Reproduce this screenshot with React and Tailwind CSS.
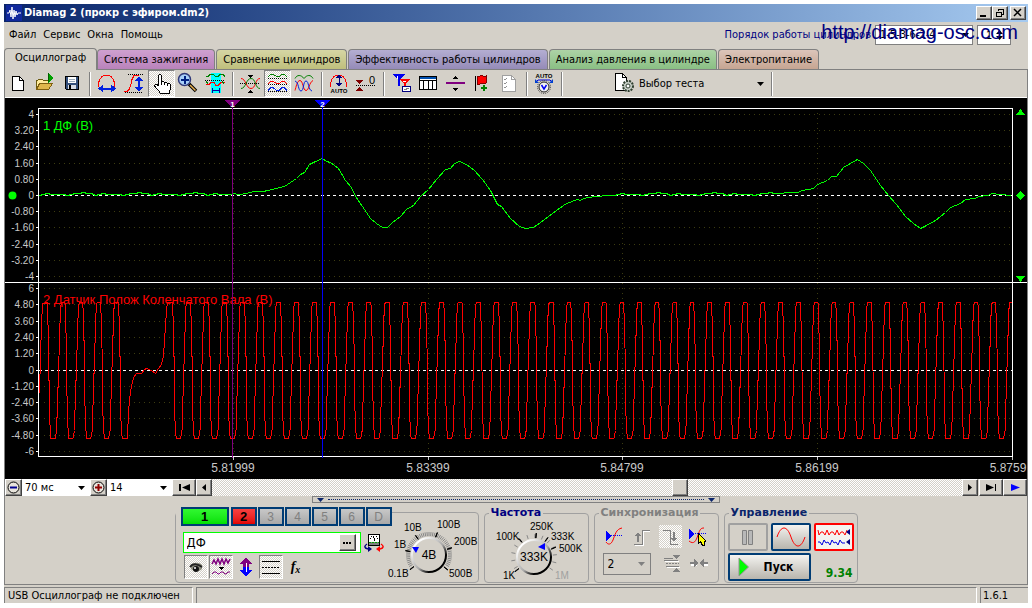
import React, { useState } from "react";

const TABS = [
  { label: "Осциллограф", color: "bg-[#d4d0c8]" },
  { label: "Система зажигания", color: "bg-linear-to-b from-[#cfa0d0] to-[#b983bb]" },
  { label: "Сравнение цилиндров", color: "bg-linear-to-b from-[#d6d6a4] to-[#bfbf7c]" },
  { label: "Эффективность работы цилиндров", color: "bg-linear-to-b from-[#b4aed2] to-[#958bb8]" },
  { label: "Анализ давления в цилиндре", color: "bg-linear-to-b from-[#add3a6] to-[#8abf84]" },
  { label: "Электропитание", color: "bg-linear-to-b from-[#dcc5ba] to-[#c6a592]" },
];

const RAISED =
  "border border-t-white border-l-white border-r-[#404040] border-b-[#404040] bg-[#d4d0c8] shadow-[inset_-1px_-1px_0_#808080]";
const CHECKER = "bg-[repeating-conic-gradient(#fff_0_25%,#d4d0c8_0_50%)] bg-[length:2px_2px]";
const PRESSED = `border border-t-[#808080] border-l-[#808080] border-r-white border-b-white ${CHECKER}`;
const BLUE_BTN = "rounded-xs border-2 border-[#003c74] bg-linear-to-b from-[#f4f3f0] to-[#b8b5ad]";

const Icon = ({ children, size = 23 }) => (
  <svg
    width={size}
    height={size}
    viewBox={`0 0 ${size} ${size}`}
    fill="none"
    shapeRendering="crispEdges"
    aria-hidden="true"
    className="shrink-0"
  >
    {children}
  </svg>
);

/* Toolbar icons */
const NewIcon = () => (
  <Icon>
    <path d="M5.5 4.5h7l4 4v10h-11z" fill="#fff" stroke="#000" />
    <path d="M12.5 4.5v4h4" stroke="#000" />
  </Icon>
);

const OpenIcon = () => (
  <Icon>
    <path d="M2.5 17.5v-9h1l1-1h4l1 1h5v3" fill="#ffeb9c" stroke="#6b5a10" />
    <path d="M2.5 17.5l3-6h13l-4 6z" fill="#e0b84c" stroke="#806010" />
    <path d="M14 1l6 5-6 5z" fill="#00a000" />
    <path d="M14.5 1v9" stroke="#006000" />
  </Icon>
);

const SaveIcon = () => (
  <Icon>
    <path d="M4.5 4.5h13v13h-12l-1-1z" fill="#35507c" stroke="#000" />
    <path d="M7 5h8v6H7z" fill="#fff" />
    <path d="M8 7.5h6M8 9.5h6" stroke="#9ab" />
    <path d="M7 13h8v4H7z" fill="#d8dce4" />
    <path d="M8 13h2v4H8z" fill="#000" />
  </Icon>
);

const WidthIcon = () => (
  <Icon>
    <path d="M2.5 15v-4l1-3 2-3 3-2h4l3 2 2 3 1 3v4" stroke="#f00" />
    <path d="M4 16.5h14" stroke="#0020e0" strokeWidth="2" />
    <path d="M2 16.5l5-4v8zM20 16.5l-5-4v8z" fill="#0020e0" />
  </Icon>
);

const HeightIcon = () => (
  <Icon>
    <path d="M5 2.5h16M2 20.5h18" stroke="#000" strokeDasharray="1 1" />
    <path d="M1 19.5h3l2-2 2-5 1-5 2-4h5" stroke="#f00" />
    <path d="M16 6v12" stroke="#0020e0" strokeWidth="2" />
    <path d="M16 4l4 5h-8zM16 20l4-5h-8z" fill="#0020e0" />
  </Icon>
);

const HandIcon = () => (
  <Icon>
    <path
      d="M8.5 13.5v-10l1-1h1l1 1v6h2l1 1h2l1 1h2l1 1v5l-1 1v3h-9l-2-3-3-3-1-2 1-1h1z"
      fill="#fff"
      stroke="#000"
    />
    <path d="M11.5 9v4M14.5 10v3M17.5 11v3" stroke="#000" />
  </Icon>
);

const ZoomIcon = () => (
  <Icon>
    <g shapeRendering="auto">
      <path d="M12 12l7 7" stroke="#000" strokeWidth="3.5" />
      <path d="M13 13l5.5 5.5" stroke="#e8b050" strokeWidth="1.5" />
      <circle cx="7.5" cy="7.5" r="6" fill="#a8d0f8" stroke="#303878" strokeWidth="1.5" />
    </g>
    <path d="M4 7h7v1H4zM7 4h1v7H7z" fill="#002080" stroke="#002080" />
  </Icon>
);

const RangeIcon = () => (
  <Icon>
    <path d="M7 1h10v20H7z" fill="#0ff" />
    <path d="M2 4.5h2l2-2h3l3 2h2l2-2h3l2 2" stroke="#008000" />
    <path d="M1 8.5h20" stroke="#000" strokeDasharray="1 1" />
    <path d="M2 12.5h3l2-2h3l2 3h2l3-3h4" stroke="#f00" />
    <path d="M2 9.5l2 2M18 9.5l2 2" stroke="#008000" />
    <path d="M8 18.5h8M8.5 16v5M15.5 16v5" stroke="#0000a0" />
  </Icon>
);

const CrossIcon = () => (
  <Icon>
    <path d="M8 3h6l-3 3zM8 21h6l-3-3z" fill="#000" />
    <path d="M1 11.5h20" stroke="#000" strokeDasharray="1 1" />
    <g shapeRendering="auto">
      <path d="M2 6.5c5 0 5 10 10 10s4-10 9-10" stroke="#f00" />
      <path d="M2 16.5c5 0 5-10 10-10s4 10 9 10" stroke="#008000" />
    </g>
  </Icon>
);

const SplitIcon = () => (
  <Icon>
    <path d="M2 6.5h19M2 12.5h19M2 19.5h19" stroke="#000" strokeDasharray="1 1" />
    <path d="M2 4.5l3-2h2l4 2h2l3-2h2l3 2" stroke="#008000" />
    <path d="M2 11.5l3-2h2l4 2h2l3-2h2l3 2" stroke="#f00" />
    <path d="M2 18.5l3-3h2l4 3h2l3-3h2l3 3" stroke="#0020e0" />
  </Icon>
);

const OverlayIcon = () => (
  <Icon>
    <g shapeRendering="auto">
      <path d="M2 6.5c2-4 6-4 9 0 3-4 7-4 9 0" stroke="#008000" />
      <path d="M2 18.5c1-3 2-10 5-10s3 10 6 10 3-8 7-10" stroke="#f00" />
      <path d="M2 9c4 1 3 10 6 10s2-10 5-10 2 9 6 10" stroke="#0020e0" />
    </g>
  </Icon>
);

const AutoHeightIcon = () => (
  <Icon>
    <path d="M2.5 15v-3l1-4 2-3 3-2h4l3 2 2 3 1 4v3" stroke="#f00" />
    <path d="M11 3v11" stroke="#000080" />
    <path d="M11 2l3 4H8zM11 15l3-4H8z" fill="#000080" />
    <text x="11" y="21" textAnchor="middle" fontSize="6" fontWeight="bold" fill="#000" fontFamily="Liberation Sans, sans-serif">
      AUTO
    </text>
  </Icon>
);

const ZeroIcon = () => (
  <Icon>
    <path d="M1 8h7l-3.5 4zM1 19h7l-3.5-4z" fill="#800000" />
    <path d="M1 13.5h19" stroke="#000" strokeDasharray="1 1" />
    <text x="14" y="12" fontSize="11" fill="#000" fontFamily="Liberation Sans, sans-serif">
      0
    </text>
  </Icon>
);

const TriggersIcon = () => (
  <Icon>
    <path d="M2 2h13l-5 6v6H8V8z" fill="#0000f0" />
    <path d="M9 7h11l-4 5v4h-2v-4z" fill="#f00" />
    <path d="M7.5 4v3M13 9.5h3" stroke="#fff" />
    <path d="M12.5 14.5h8v5h-8z" fill="#fff" stroke="#000080" />
    <path d="M14 17.5h2l1-1h2" stroke="#808080" />
  </Icon>
);

const TableIcon = () => (
  <Icon>
    <path d="M2.5 4.5h17v13h-17z" fill="#fff" stroke="#000" />
    <path d="M3 5h16v2H3z" fill="#0050b0" />
    <path d="M3 8.5h16M6.5 8v9M11.5 8v9M15.5 8v9" stroke="#000" />
  </Icon>
);

const MoveIcon = () => (
  <Icon>
    <path d="M8 7h6l-3-3zM8 16h6l-3 3z" fill="#000" />
    <path d="M2 11h19" stroke="#800080" strokeWidth="2" />
  </Icon>
);

const FlagIcon = () => (
  <Icon>
    <path d="M4.5 4v15" stroke="#000" />
    <path d="M6 5l3-1 2-1 2 2 2-1v7l-2 1-2-1-2 1-3 1z" fill="#f00" stroke="#800000" />
    <path d="M13 13v6M10 16h6" stroke="#008000" strokeWidth="2" />
  </Icon>
);

const ChecklistIcon = () => (
  <Icon>
    <path d="M4.5 3.5h9l4 4v12h-13z" fill="#fff" stroke="#a0a0a0" />
    <path d="M13.5 3.5v4h4" stroke="#a0a0a0" />
    <path d="M6 7l1 1 2-2M6 11l1 1 2-2M6 15l1 1 2-2" stroke="#909090" />
  </Icon>
);

const AutoDialIcon = () => (
  <Icon>
    <text x="11" y="6" textAnchor="middle" fontSize="6" fontWeight="bold" fill="#000" fontFamily="Liberation Sans, sans-serif">
      AUTO
    </text>
    <g shapeRendering="auto">
      <path d="M3 10l2-2h12l2 2" stroke="#0000e0" />
      <path d="M2 7v4h4zM20 7v4h-4z" fill="#0040d0" />
      <circle cx="11" cy="15" r="6.5" stroke="#404040" strokeDasharray="1 1" />
      <circle cx="11" cy="15" r="5" fill="#f4f4f4" stroke="#202020" />
      <path d="M8.5 13l2.5 4 2.5-4" stroke="#0000f0" strokeWidth="1.5" />
    </g>
  </Icon>
);

const TestIcon = () => (
  <Icon>
    <path d="M3.5 1.5h7l4 4v13h-11z" fill="#fff" stroke="#000" />
    <path d="M10.5 1.5v4h4" stroke="#000" />
    <g shapeRendering="auto">
      <circle cx="16" cy="14" r="5" fill="#c8d0c8" stroke="#304030" strokeWidth="2" strokeDasharray="2 1" />
      <circle cx="16" cy="14" r="2" fill="#fff" stroke="#304030" />
    </g>
  </Icon>
);

const TOOLBAR = [
  [
    ["Новый", NewIcon],
    ["Открыть", OpenIcon],
    ["Сохранить", SaveIcon],
  ],
  [
    ["Растянуть по ширине", WidthIcon],
    ["Растянуть по высоте", HeightIcon],
    ["Перемещение", HandIcon, true],
    ["Увеличить", ZoomIcon],
    ["Диапазон", RangeIcon],
  ],
  [
    ["Совместить нули", CrossIcon],
    ["Разделить каналы", SplitIcon, true],
    ["Наложить каналы", OverlayIcon],
  ],
  [
    ["Автомасштаб", AutoHeightIcon],
    ["Обнуление", ZeroIcon],
  ],
  [
    ["Маркеры", TriggersIcon],
    ["Таблица", TableIcon],
    ["Линейка", MoveIcon],
    ["Добавить метку", FlagIcon],
    ["Отчёт", ChecklistIcon],
  ],
  [["Автоизмерение", AutoDialIcon]],
];

const Separator = () => (
  <div className="flex w-2 shrink-0 justify-center">
    <div className="h-6 w-[2px] border-l border-[#808080] bg-white" />
  </div>
);

const Arrow = ({ className = "" }) => (
  <svg width="7" height="4" viewBox="0 0 7 4" aria-hidden="true" className={`pointer-events-none shrink-0 ${className}`}>
    <path d="M0 0h7L3.5 4z" fill="currentColor" />
  </svg>
);

/* Scope traces */
const GREEN_SHAPE = [
  [232, 193], [239, 194], [246, 193], [253, 191], [262, 191], [268, 190], [275, 188], [284, 186], [290, 182],
  [296, 178], [300, 174], [304, 172], [309, 164], [315, 161], [322, 158], [326, 161], [330, 162], [334, 165],
  [338, 168], [345, 180], [351, 187], [355, 196], [362, 206], [370, 218], [376, 223], [382, 227], [387, 227],
  [392, 222], [400, 216], [406, 209], [413, 205], [420, 196], [428, 189], [436, 179], [445, 169], [450, 168],
  [454, 163], [459, 161], [466, 164], [474, 170], [482, 179], [490, 190], [497, 204], [501, 206], [510, 218],
  [519, 226], [525, 228], [533, 227], [540, 222], [548, 216], [556, 210], [566, 203], [577, 199], [580, 200],
  [583, 198], [595, 196], [609, 195],
];
const GREEN_TAIL = [
  [780, 193], [788, 192], [797, 192], [802, 190], [813, 188], [817, 184], [827, 180], [831, 176], [836, 176],
  [843, 167], [850, 163], [857, 159], [863, 163], [870, 170], [880, 185], [888, 195], [896, 204], [905, 216],
  [913, 223], [920, 228], [926, 225], [935, 220], [945, 212], [950, 207], [960, 203], [965, 199], [975, 198],
  [978, 196], [988, 195], [991, 193], [1000, 194], [1011, 195],
];
const NOISE = [195, 194, 193, 194, 194, 192, 193, 195, 193, 194, 194, 193, 194, 193];

const noise = (from, to) => {
  const points = [];
  for (let x = from, i = 0; x < to; x += 4, i++) points.push([x, NOISE[(i * 3) % NOISE.length]]);
  return points;
};

const GREEN = [...noise(39, 232), ...GREEN_SHAPE, ...noise(614, 778), ...GREEN_TAIL];

// one tooth of the crankshaft sensor, x is relative to the middle of the trough
const PULSE = [
  [-6, 302], [-5.3, 320], [-4.6, 347], [-4.3, 370], [-4, 395], [-3.5, 420], [-2.3, 438], [2, 438],
  [3.5, 430], [4, 410], [4.7, 391], [5.3, 370], [6, 350], [6.7, 325], [7.5, 306], [8.3, 302],
];
const GAP = [
  [127, 438], [128, 410], [130, 391], [133, 377], [136, 373], [141, 373], [144, 369], [146, 368],
  [151, 370], [155, 373], [158, 368], [161, 364], [163, 355], [164, 340], [166, 310], [167, 302],
];

const pulses = (first, period, count) =>
  Array.from({ length: count }, (_, i) => PULSE.map(([dx, y]) => [first + i * period + dx, y])).flat();

const RED = [
  [39, 393], [40, 355], [41, 325], [42, 303],
  ...pulses(52.7, 17.8, 4),
  ...PULSE.slice(0, 7).map(([dx, y]) => [124 + dx, y]),
  ...GAP,
  ...pulses(178, 18, 9),
  ...pulses(340, 18.22, 12),
  ...pulses(558.7, 17.6, 8),
  ...pulses(699.2, 17.76, 18),
  [1011, 302],
];

const toPoints = (list) => list.map(([x, y]) => `${(x - 4.5).toFixed(1)},${(y - 97.5).toFixed(1)}`).join(" ");

const TOP_LABELS = ["4", "3.20", "2.40", "1.60", "0.80", "0", "-0.80", "-1.60", "-2.40", "-3.20", "-4"];
const BOTTOM_LABELS = ["6", "4.80", "3.60", "2.40", "1.20", "0", "-1.20", "-2.40", "-3.60", "-4.80", "-6"];
const TIMES = [
  [228, "5.81999"],
  [423, "5.83399"],
  [617, "5.84799"],
  [812, "5.86199"],
  [1007, "5.8759"],
];

const Scale = ({ labels, top, step }) =>
  labels.map((label, i) => {
    const y = Math.round(top + i * step);
    return (
      <g key={label}>
        <path d={`M31 ${y + 0.5}h3`} stroke="#fff" />
        <text x="29" y={y + 4} textAnchor="end" fontSize="10" fill="#c8c8c8">
          {label}
        </text>
        {label === "0" ? (
          <path d={`M34 ${y + 0.5}H1007`} stroke="#fff" strokeDasharray="3 3" />
        ) : (
          <path d={`M39 ${y + 0.5}H1007`} stroke="#3c3c10" strokeDasharray="1 4" />
        )}
      </g>
    );
  });

const Cursor = ({ x, color, label }) => (
  <g>
    <path d={`M${x + 0.5} 8V360`} stroke={color} />
    <path d={`M${x - 7} 2h15l-7 8h-1z`} fill={color} />
    <text x={x + 0.5} y="9" textAnchor="middle" fontSize="8" fontWeight="bold" fill="#fff">
      {label}
    </text>
  </g>
);

const Chart = () => (
  <svg
    viewBox="0 0 1022 381"
    className="block h-auto w-full bg-black font-['Liberation_Sans',sans-serif]"
    fill="none"
    shapeRendering="crispEdges"
    role="img"
    aria-label="Осциллограмма"
  >
    <Scale labels={TOP_LABELS} top={16} step={16.2} />
    <Scale labels={BOTTOM_LABELS} top={190} step={16.3} />
    {TIMES.map(([x, label]) => (
      <g key={label}>
        <path d={`M${x + 0.5} 15V358`} stroke="#3c3c10" strokeDasharray="1 4" />
        <path d={`M${x + 0.5} 359v3`} stroke="#c8c8c8" />
        <text x={Math.min(x, 1003)} y="374" textAnchor="middle" fontSize="12" fill="#c8c8c8">
          {label}
        </text>
      </g>
    ))}
    <polyline points={toPoints(GREEN)} stroke="#0f0" />
    <text x="38" y="32" fontSize="13" fill="#0f0">
      1 ДФ (В)
    </text>
    <text x="38" y="206" fontSize="13" fill="#f00">
      2 Датчик Полож Коленчатого Вала (В)
    </text>
    <polyline points={toPoints(RED)} stroke="#f00" />
    <path d="M33.5 358.5V10.5h974v348zM0 184.5h1022" stroke="#fff" />
    <Cursor x={227} color="#800080" label="1" />
    <Cursor x={317} color="#0000f8" label="2" />
    <g fill="#0f0">
      <circle cx="7.5" cy="97.5" r="4" shapeRendering="auto" />
      <path d="M1011 17h9l-4.5-6zM1011 178h9l-4.5 6zM1011 97.5l4.5-4.5 4.5 4.5-4.5 4.5z" />
    </g>
  </svg>
);

/* Rotary knobs */
const Ticks = ({ cx, cy, from, to, count, r1, r2, color }) =>
  Array.from({ length: count }, (_, i) => {
    const a = ((from + ((to - from) * i) / (count - 1)) * Math.PI) / 180;
    return (
      <line
        key={i}
        x1={cx + r1 * Math.sin(a)}
        y1={cy - r1 * Math.cos(a)}
        x2={cx + r2 * Math.sin(a)}
        y2={cy - r2 * Math.cos(a)}
        stroke={color}
      />
    );
  });

const Knob = ({ id, width, cx, value, pointer, labels, minor, major }) => (
  <svg
    width={width}
    height="64"
    viewBox={`0 0 ${width} 64`}
    className="shrink-0 overflow-visible font-['Liberation_Sans',sans-serif]"
    role="img"
    aria-label={value}
  >
    <defs>
      <linearGradient id={id} x1="0" y1="0" x2="1" y2="1">
        <stop offset="0.15" stopColor="#fff" />
        <stop offset="0.55" stopColor="#a8a8a8" />
        <stop offset="0.75" stopColor="#000" />
      </linearGradient>
    </defs>
    <Ticks cx={cx} cy={38} r1={19} {...minor} color="#888" />
    {major.map((angle) => (
      <Ticks key={angle} cx={cx} cy={38} from={angle} to={angle + 1} count={2} r1={19} r2={24} color="#000" />
    ))}
    <circle cx={cx} cy="38" r="17" fill="#d4d0c8" stroke={`url(#${id})`} strokeWidth="2" />
    <path d={pointer} fill="#00f" />
    <text x={cx} y="42" textAnchor="middle" fontSize="12" fill="#000">
      {value}
    </text>
    {labels.map(([x, y, text, color = "#000"]) => (
      <text key={text} x={x} y={y} fontSize="10" fill={color}>
        {text}
      </text>
    ))}
  </svg>
);

const Group = ({ title, titleColor, className, children }) => (
  <fieldset className={`min-w-0 rounded-sm border border-[#a0a0a0] ${className}`}>
    <legend className={`ml-1 px-[2px] text-[11px] leading-3 font-bold font-['DejaVu_Sans',sans-serif] ${titleColor}`}>
      {title}
    </legend>
    {children}
  </fieldset>
);

const TitleBar = () => (
  <div className="flex h-[18px] items-center bg-linear-to-r from-[#0a246a] to-[#a6caf0] px-[2px]">
    <svg width="16" height="16" viewBox="0 0 16 16" aria-hidden="true">
      <path d="M0 0h16v16H0z" fill="#10289c" />
      <path d="M1 8h2l1-3 1 7 1-10 1 12 1-9 1 7 1-6 1 4 1-2h3" stroke="#fff" fill="none" />
    </svg>
    <h1 className="ml-[2px] flex-1 text-[11px] leading-4 font-bold text-white font-['DejaVu_Sans_Condensed',sans-serif]">
      Diamag 2 (прокр с эфиром.dm2)
    </h1>
    <button aria-label="Свернуть" className={`flex h-[14px] w-4 items-center justify-center ${RAISED}`}>
      <svg width="10" height="10" viewBox="0 0 10 10">
        <path d="M1 7h6v2H1z" />
      </svg>
    </button>
    <button aria-label="Восстановить" className={`flex h-[14px] w-4 items-center justify-center ${RAISED}`}>
      <svg width="10" height="10" viewBox="0 0 10 10" fill="none" stroke="#000" shapeRendering="crispEdges">
        <path d="M3.5 3V1.5h5v5H7M3 1.5h6M1.5 4.5h5v4h-5zM1 4.5h6" />
      </svg>
    </button>
    <button aria-label="Закрыть" className={`ml-[2px] flex h-[14px] w-4 items-center justify-center ${RAISED}`}>
      <svg width="10" height="10" viewBox="0 0 10 10" stroke="#000" strokeWidth="1.5">
        <path d="M1 1l7 7M8 1L1 8" />
      </svg>
    </button>
  </div>
);

const MenuBar = () => (
  <div className="relative flex h-[26px] items-center pr-[17px] pl-[5px]">
    <nav className="flex flex-1 gap-[7px]">
      {["Файл", "Сервис", "Окна", "Помощь"].map((item) => (
        <button key={item}>{item}</button>
      ))}
    </nav>
    <label htmlFor="order" className="mr-1 text-[#000080]">
      Порядок работы цилиндров
    </label>
    <div className="relative mr-1 flex items-center">
      <select id="order" className="h-5 w-[98px] appearance-none border border-[#808080] bg-white pl-1 text-[11px]">
        <option>1-5-3-6-2-4</option>
      </select>
      <Arrow className="absolute right-1" />
    </div>
    <div className="relative flex items-center">
      <input aria-label="Цилиндр" defaultValue="1" className="h-5 w-[34px] border border-[#808080] bg-white pl-2" />
      <div className="absolute right-2 flex flex-col gap-[2px]">
        <Arrow className="rotate-180" />
        <Arrow />
      </div>
    </div>
    <a
      href="http://diamag-osc.com"
      className="absolute top-0 right-[10px] text-xl leading-5 text-[#000080] font-['Liberation_Sans',sans-serif]"
    >
      http://diamag-osc.com
    </a>
  </div>
);

const Tabs = () => {
  const [active, setActive] = useState(0);

  return (
    <div role="tablist" className="flex items-end border-b border-[#808080]">
      {TABS.map((tab, i) => (
        <button
          key={tab.label}
          role="tab"
          aria-selected={i === active}
          onClick={() => setActive(i)}
          className={`rounded-t-sm border border-b-0 border-[#808080] ${tab.color} ${
            i === active ? "-mb-px h-[22px] px-[10px] pb-1" : "mr-px h-5 px-[6px]"
          }`}
        >
          {tab.label}
        </button>
      ))}
    </div>
  );
};

const Toolbar = () => (
  <div className="flex h-7 items-center border-b border-white">
    {TOOLBAR.map((group, i) => (
      <React.Fragment key={i}>
        {group.map(([label, Glyph, pressed]) => (
          <button
            key={label}
            aria-label={label}
            className={`flex size-[27px] shrink-0 items-center justify-center ${pressed ? PRESSED : ""}`}
          >
            <Glyph />
          </button>
        ))}
        <Separator />
      </React.Fragment>
    ))}
    <button className="ml-[46px] flex h-6 w-[156px] items-center">
      <TestIcon />
      <span className="ml-1 flex-1 text-left">Выбор теста</span>
      <Arrow className="mr-1" />
    </button>
    <Separator />
  </div>
);

const ScrollRow = () => (
  <div className="flex h-[17px] bg-[#d4d0c8]">
    <button aria-label="Уменьшить" className={`flex w-[17px] items-center justify-center ${RAISED}`}>
      <svg width="13" height="13" viewBox="0 0 13 13">
        <circle cx="6.5" cy="6.5" r="5.5" fill="#e8e4dc" stroke="#000" />
        <path d="M3 5.5h7v2H3z" fill="#000090" />
      </svg>
    </button>
    <div className="relative flex items-center">
      <select aria-label="Развёртка" className="h-full w-[68px] appearance-none bg-white pl-[3px]">
        <option>70 мс</option>
      </select>
      <Arrow className="absolute right-[5px]" />
    </div>
    <button aria-label="Увеличить" className={`flex w-[17px] items-center justify-center ${RAISED}`}>
      <svg width="13" height="13" viewBox="0 0 13 13">
        <circle cx="6.5" cy="6.5" r="5.5" fill="#e8e4dc" stroke="#000" />
        <path d="M3 5.5h7v2H3zM5.5 3h2v7h-2z" fill="#900000" />
      </svg>
    </button>
    <div className="relative flex items-center">
      <select aria-label="Масштаб" className="h-full w-[65px] appearance-none bg-white pl-[3px]">
        <option>14</option>
      </select>
      <Arrow className="absolute right-[5px]" />
    </div>
    <button aria-label="В начало" className={`flex w-6 items-center justify-center ${RAISED}`}>
      <svg width="11" height="7" viewBox="0 0 11 7">
        <path d="M0 0h2v7H0zM11 0v7L3 3.5z" />
      </svg>
    </button>
    <button aria-label="Назад" className={`flex w-4 items-center justify-center ${RAISED}`}>
      <svg width="4" height="7" viewBox="0 0 4 7">
        <path d="M4 0v7L0 3.5z" />
      </svg>
    </button>
    <div className={`flex flex-1 ${CHECKER}`}>
      <div className="flex-[460]" />
      <div className={`w-4 ${RAISED}`} />
      <div className="flex-[274]" />
    </div>
    <button aria-label="Вперёд" className={`flex w-4 items-center justify-center ${RAISED}`}>
      <svg width="4" height="7" viewBox="0 0 4 7">
        <path d="M0 0v7l4-3.5z" />
      </svg>
    </button>
    <button aria-label="В конец" className={`ml-px flex w-6 items-center justify-center ${RAISED}`}>
      <svg width="11" height="7" viewBox="0 0 11 7">
        <path d="M9 0h1v7H9zM0 0v7l8-3.5z" />
      </svg>
    </button>
    <button aria-label="Прокрутка" className={`flex w-6 items-center justify-center ${RAISED}`}>
      <svg width="9" height="7" viewBox="0 0 9 7">
        <path d="M0 0v7l9-3.5z" fill="#00f" />
      </svg>
    </button>
  </div>
);

const Splitter = () => (
  <div className="mx-auto flex h-[7px] w-2/5 items-center gap-1 border border-[#808080] px-1 text-[#0a246a]">
    <Arrow />
    <div className="flex-1 border-t border-dotted border-[#0a246a]" />
    <Arrow />
  </div>
);

const ChannelPanel = () => {
  const [name, setName] = useState("ДФ");

  return (
    <fieldset className="mt-[9px] flex h-[71px] w-[304px] rounded-sm border border-[#a0a0a0]">
      <div className="-mt-[6px] flex w-[216px] shrink-0 flex-col">
        <div className="flex gap-px bg-[#d4d0c8] pl-[5px] text-[13px] leading-4 font-bold font-['Liberation_Sans',sans-serif]">
          <button className="mr-px h-[19px] w-12 border-2 border-[#003c74] bg-linear-to-b from-[#30f830] to-[#00e000]">
            1
          </button>
          <button className="h-[19px] w-[26px] border-2 border-[#003c74] bg-linear-to-b from-[#f84040] to-[#e00000]">
            2
          </button>
          {["3", "4", "5", "6", "D"].map((channel) => (
            <button
              key={channel}
              className="h-[19px] w-[26px] border-2 border-[#003c74] bg-linear-to-b from-[#c8c8c8] to-[#a8a8a8] text-xs leading-4 font-normal text-[#808080]"
            >
              {channel}
            </button>
          ))}
        </div>
        <div className="mt-[6px] flex items-center gap-[3px] pl-[7px]">
          <div className="flex h-[21px] w-[178px] items-center border border-[#0f0] bg-white pr-1">
            <input
              aria-label="Название канала"
              value={name}
              onChange={(e) => setName(e.target.value)}
              className="w-full min-w-0 flex-1 pl-[3px] text-[13px] leading-4 outline-none"
            />
            <button aria-label="Выбрать" className={`flex h-[17px] w-[17px] items-center justify-center gap-px ${RAISED}`}>
              <i className="size-[2px] bg-black" />
              <i className="size-[2px] bg-black" />
              <i className="size-[2px] bg-black" />
            </button>
          </div>
          <button aria-label="Прибор">
            <Icon size={20}>
              <path d="M4.500 1.500h11v11h-11z" fill="#fff" stroke="#000" />
              <path d="M5 9h10v3H5z" fill="#808080" />
              <path d="M7 3.500h1M9 3.500h1M12 3.500h1M6 5.500h1M13 5.500h1M10.500 8v-2l-1-2" stroke="#000" />
              <path d="M5 9.500h10" stroke="#00a000" strokeDasharray="2 1" />
              <g shapeRendering="auto">
                <path d="M3 11c-3 2-3 4 1 5" stroke="#000080" strokeWidth="1.500" />
                <path d="M4 13v6l4-3z" fill="#000080" />
                <path d="M17 11c3 2 3 4-1 5" stroke="#f00" strokeWidth="1.500" />
                <path d="M16 13v6l-4-3z" fill="#f00" />
              </g>
            </Icon>
          </button>
        </div>
        <div className="mt-[2px] flex gap-px pl-2">
          <button aria-label="Видимость" className={`flex size-6 items-center justify-center ${PRESSED}`}>
            <Icon size={20}>
              <g shapeRendering="auto">
                <path d="M4 8c4-3 9-3 12 0v4c-3 3-8 3-11 0z" fill="#909080" />
                <path d="M4 10c3-4 8-3 12 0" stroke="#222" strokeWidth="2" />
                <circle cx="10" cy="12" r="3" fill="#111" />
                <circle cx="9" cy="11" r="1" fill="#fff" />
              </g>
            </Icon>
          </button>
          <button aria-label="Фильтр" className={`flex size-6 items-center justify-center ${PRESSED}`}>
            <Icon size={20}>
              <g shapeRendering="auto">
                <path d="M1 7l2-4 2 4 2-5 2 5 2-5 2 5 2-5 2 4 2-4" stroke="#800080" strokeWidth="1.500" />
                <path d="M1 17l2-2h2l2 2h1l2-2h2l2 2h1l2-2h2" stroke="#800080" />
              </g>
              <path d="M8 10h5l-2.500 3z" fill="#000" />
            </Icon>
          </button>
          <button aria-label="Инверсия" className="flex size-6 items-center justify-center">
            <Icon size={20}>
              <path d="M10 1l7 6h-4v3H7V7H3z" fill="#800080" />
              <path d="M10 19l7-6h-4v-3H7v3H3z" fill="#00f" />
              <path d="M10 6v9" stroke="#fff" />
            </Icon>
          </button>
          <button aria-label="Линии" className={`flex size-6 items-center justify-center ${PRESSED}`}>
            <Icon size={20}>
              <path d="M1 4.500h18M1 16.500h18" stroke="#000" />
              <path d="M1 10.500h18" stroke="#000" strokeDasharray="2 1" />
            </Icon>
          </button>
          <button className="flex size-6 items-center justify-center text-sm leading-4 font-bold italic font-['Liberation_Serif',serif]">
            f<sub className="text-[10px]">x</sub>
          </button>
        </div>
      </div>
      <div className="mt-1">
        <Knob
          id="volts"
          width={86}
          cx={37}
          value="4В"
          pointer="M20 30h7l-3 6z"
          labels={[
            [12, 14, "10В"],
            [45, 11, "100В"],
            [2, 31, "1В"],
            [62, 28, "200В"],
            [-4, 60, "0.1В"],
            [57, 60, "500В"],
          ]}
          minor={{ from: -120, to: 120, count: 49, r2: 23 }}
          major={[-128, -80, -35, 20, 72, 128]}
        />
      </div>
    </fieldset>
  );
};

const SyncPanel = () => (
  <Group title="Синхронизация" titleColor="text-[#808080]" className="h-[76px] w-[125px]">
    <div className="flex justify-between pt-[6px] pr-2 pl-2">
      <button aria-label="Уровень">
        <Icon>
          <path d="M3 6v10l6-5z" fill="#00f" />
          <path d="M8 10.500h11" stroke="#00f" strokeDasharray="1 1" />
          <path d="M3 17c2 3 5 3 7-2s3-11 9-12" stroke="#f00" shapeRendering="auto" />
        </Icon>
      </button>
      <button aria-label="По фронту">
        <Icon>
          <path d="M3 19.500h8V5.500h8" stroke="#808080" />
          <path d="M4 20.500h8V6.500h7" stroke="#fff" />
          <path d="M7 9v8" stroke="#808080" strokeWidth="2" />
          <path d="M4 11h6L7 7z" fill="#808080" />
        </Icon>
      </button>
      <button aria-label="По спаду" className={CHECKER}>
        <Icon>
          <path d="M4 5.500h7v14h8" stroke="#808080" />
          <path d="M15 7v8" stroke="#808080" strokeWidth="2" />
          <path d="M12 13h6l-3 4z" fill="#808080" />
        </Icon>
      </button>
      <button aria-label="Выбор уровня">
        <Icon>
          <path d="M2 4v10l6-5z" fill="#00f" />
          <path d="M8 8.500h12" stroke="#00f" strokeDasharray="1 1" />
          <path d="M2 16c5 4 7 0 9-6s3-7 6-7" stroke="#f00" shapeRendering="auto" />
          <path d="M11.500 8.500v10l2-2 2 4h2v-4h1v-1z" fill="#ff0" stroke="#000" />
        </Icon>
      </button>
    </div>
    <div className="mt-1 flex items-center pr-2 pl-2">
      <div className="relative flex items-center">
        <select
          aria-label="Канал синхронизации"
          className="h-[22px] w-12 appearance-none border border-[#808080] bg-[#d4d0c8] pl-1 text-xs"
        >
          <option>2</option>
        </select>
        <Arrow className="absolute right-[6px] text-[#808080]" />
      </div>
      <button aria-label="Порог" className="ml-[10px]">
        <Icon>
          <path d="M4 9.500h14M6 15.500h13" stroke="#fff" />
          <path d="M3 6.500h9M3 8.500h14" stroke="#808080" />
          <path d="M5 11.500h13" stroke="#808080" strokeDasharray="2 1" />
          <path d="M5 14.500h13" stroke="#808080" />
          <path d="M12 3h7l-3.500 4zM12 20h7l-3.500-4z" fill="#808080" />
        </Icon>
      </button>
      <button aria-label="Центр" className="ml-1">
        <Icon>
          <path d="M3 12.500h6M14 12.500h6" stroke="#fff" strokeWidth="2" />
          <path d="M2 11h6M14 11h6" stroke="#808080" strokeWidth="2" />
          <path d="M6 7v8l5-4zM16 7v8l-5-4z" fill="#808080" />
        </Icon>
      </button>
    </div>
  </Group>
);

const ControlPanel = () => (
  <Group title="Управление" titleColor="text-[#0a246a]" className="h-[76px] w-[134px]">
    <div className="flex gap-[3px] pt-1 pl-[3px]">
      <button
        aria-label="Пауза"
        className="flex h-7 w-10 items-center justify-center rounded-xs border-2 border-[#a0a0a0]"
      >
        <svg width="11" height="15" viewBox="0 0 11 15" fill="#b8b8b8" stroke="#808080" aria-hidden="true">
          <path d="M.5.5h4v14h-4zM6.500.5h4v14h-4z" />
        </svg>
      </button>
      <button aria-label="Один кадр" className={`flex h-7 w-10 items-center justify-center ${BLUE_BTN}`}>
        <svg width="30" height="20" viewBox="0 0 30 20" fill="none" stroke="#f00" aria-hidden="true">
          <path d="M1 10C5-2 11-2 15 10s10 12 14 0" />
        </svg>
      </button>
      <button
        aria-label="Непрерывно"
        className="flex h-7 w-10 items-center justify-center rounded-xs border-2 border-[#f00] bg-[#f4f3f0]"
      >
        <svg width="34" height="20" viewBox="0 0 34 20" fill="none" aria-hidden="true">
          <path d="M1 3l1 5 2-3h2l2 3 2-5 2 5 2-3h2l2 3 2-5 2 5 2-3h2l2 3 2-5" stroke="#f00" />
          <path d="M1 15h2l2 3 2-5 2 3 2-1 2 3 2-5 2 3 2-1 2 3 2-5 2 3h3" stroke="#0000e0" />
          <path d="M33 2v6l-4-3zM33 12v6l-4-3z" fill="#000080" />
        </svg>
      </button>
    </div>
    <div className="flex items-end pt-[2px] pl-[3px]">
      <button
        className={`flex h-7 w-[83px] items-center pl-2 text-xs font-bold font-['DejaVu_Sans_Condensed',sans-serif] ${BLUE_BTN}`}
      >
        <svg width="11" height="20" viewBox="0 0 11 20" aria-hidden="true">
          <path d="M1 1v18L10.500 10z" fill="#0f0" stroke="#909090" />
        </svg>
        <span className="flex-1 text-center">Пуск</span>
      </button>
      <output className="flex-1 pr-1 text-right text-xs leading-4 font-bold text-[#008000] font-['DejaVu_Sans_Condensed',sans-serif]">
        9.34
      </output>
    </div>
  </Group>
);

const BottomPanel = () => (
  <div className="flex items-end justify-center gap-[5px] pb-px">
    <ChannelPanel />
    <Group title="Частота" titleColor="text-[#000080]" className="h-[76px] w-[105px]">
      <Knob
        id="rate"
        width={100}
        cx={49}
        value="333K"
        pointer="M53 28l7-4v7z"
        labels={[
          [11, 21, "100K"],
          [45, 11, "250K"],
          [66, 21, "333K"],
          [74, 33, "500K"],
          [70, 60, "1M", "#a0a0a0"],
          [18, 60, "1K"],
        ]}
        minor={{ from: -120, to: 125, count: 13, r2: 23 }}
        major={[-128, -40, 5, 35, 65]}
      />
    </Group>
    <SyncPanel />
    <ControlPanel />
  </div>
);

const StatusBar = () => (
  <footer className="flex gap-[3px] border-t border-[#808080] pt-[2px]">
    <div className="h-4 w-[189px] border-t border-l border-r border-[#808080] border-r-white pl-[3px] leading-4">
      USB Осциллограф не подключен
    </div>
    <div className="h-4 flex-1 border-t border-l border-r border-[#808080] border-r-white" />
    <div className="h-4 w-12 border-t border-l border-[#808080] pl-[2px] leading-4">1.6.1</div>
  </footer>
);

export default function App() {
  return (
    <div className="bg-white p-1 text-[11px] leading-4 text-black font-['DejaVu_Sans_Condensed','DejaVu_Sans',sans-serif]">
      <main className="bg-[#d4d0c8]">
        <TitleBar />
        <MenuBar />
        <Tabs />
        <div className="border-x border-[#808080]">
          <Toolbar />
          <Chart />
          <ScrollRow />
          <Splitter />
          <BottomPanel />
        </div>
        <StatusBar />
      </main>
    </div>
  );
}
